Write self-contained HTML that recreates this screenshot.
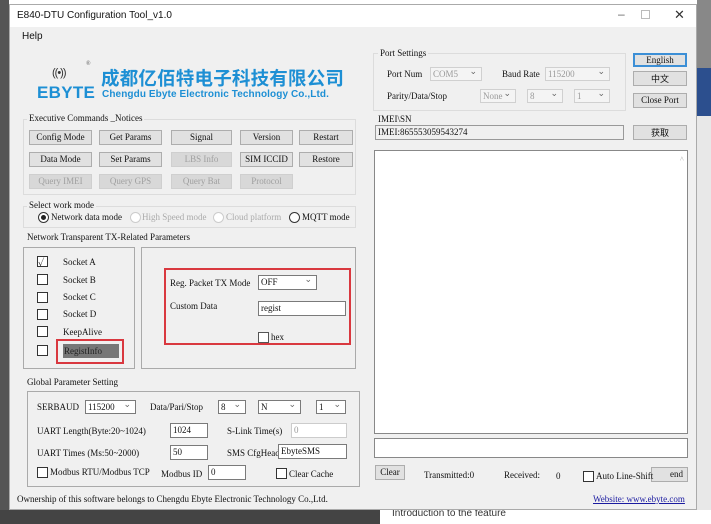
<!DOCTYPE html>
<html><head><meta charset="utf-8"><style>
*{box-sizing:border-box;margin:0;padding:0}
body{width:711px;height:524px;overflow:hidden;position:relative;background:#fff;font-family:"Liberation Serif","Noto Serif CJK SC",serif;font-size:9px;color:#111}
.a{position:absolute;white-space:nowrap}
.win{position:absolute;left:9px;top:4px;width:688px;height:506px;background:#f0f0f0;border:1px solid #aaa}
.bt{position:absolute;background:#e1e1e1;border:1px solid #adadad;text-align:center;font-size:9px;line-height:13px}
.dis{color:#a0a0a0;background:#d8d8d8;border-color:#cfcfcf}
.grp{position:absolute;border:1px solid #dcdcdc}
.in{position:absolute;background:#fff;border:1px solid #7a7a7a;font-size:9px;line-height:13px;padding-left:2px}
.sel{position:absolute;background:#fff;border:1px solid #7a7a7a;font-size:9px;line-height:13px;padding-left:2px}
.sel:after{content:"⌄";position:absolute;right:4px;top:-3px;color:#666}
.sd{background:#f4f4f4;border-color:#d0d0d0;color:#999}
.cb{position:absolute;width:11px;height:11px;border:1px solid #333;background:#fff}
.rd{position:absolute;width:11px;height:11px;border:1px solid #333;border-radius:50%;background:#fff}
.red{position:absolute;border:2px solid #d9383f}
</style></head><body>
<div class="a" style="left:0;top:0;width:9px;height:524px;background:#555"></div>
<div class="a" style="left:0;top:510px;width:380px;height:14px;background:#444"></div>
<div class="a" style="left:697px;top:0;width:14px;height:70px;background:#888"></div>
<div class="a" style="left:697px;top:68px;width:14px;height:48px;background:#2c4f8e"></div>
<div class="a" style="left:697px;top:116px;width:14px;height:394px;background:#e8e8e8"></div>
<div class="a" style="left:392px;top:508px;font-family:'Liberation Sans';font-size:10px;color:#333">Introduction to the feature</div>
<div class="win">
<div class="a" style="left:0;top:0;width:686px;height:22px;background:#fff"></div>
<div class="a" style="left:7px;top:5px;font-family:'Liberation Sans';font-size:10px">E840-DTU Configuration Tool_v1.0</div>
<div class="a" style="left:608px;top:2px;font-family:'Liberation Sans';font-size:12px;color:#666">–</div>
<div class="a" style="left:631px;top:5px;width:9px;height:9px;border:1px solid #bbb"></div>
<div class="a" style="left:664px;top:2px;font-family:'Liberation Sans';font-size:13px;color:#333">✕</div>
<div class="a" style="left:12px;top:26px;font-family:'Liberation Sans';font-size:10px">Help</div>
<!-- logo -->
<div class="a" style="left:42px;top:62px;font-family:'Liberation Sans';font-size:11px;color:#333;letter-spacing:-1px">((•))</div>
<div class="a" style="left:76px;top:56px;font-size:6px;color:#555">®</div>
<div class="a" style="left:27px;top:78px;font-family:'Liberation Sans';font-weight:bold;font-size:17px;color:#1d8fd4;letter-spacing:0.3px">EBYTE</div>
<div class="a" style="left:91px;top:62px;font-family:'Noto Sans CJK SC',sans-serif;font-weight:bold;font-size:18.5px;line-height:22px;color:#1d8fd4;letter-spacing:0.2px">成都亿佰特电子科技有限公司</div>
<div class="a" style="left:92px;top:84px;font-family:'Liberation Sans';font-weight:bold;font-size:10px;color:#1d8fd4;letter-spacing:0.1px">Chengdu Ebyte Electronic Technology Co.,Ltd.</div>
<!-- exec -->
<div class="grp" style="left:13px;top:114px;width:333px;height:76px"></div>
<div class="a" style="left:17px;top:108px;background:#f0f0f0;padding:0 2px">Executive Commands _Notices</div>
<div class="bt" style="left:19px;top:125px;width:63px;height:15px">Config Mode</div>
<div class="bt" style="left:89px;top:125px;width:63px;height:15px">Get Params</div>
<div class="bt" style="left:161px;top:125px;width:61px;height:15px">Signal</div>
<div class="bt" style="left:230px;top:125px;width:53px;height:15px">Version</div>
<div class="bt" style="left:289px;top:125px;width:54px;height:15px">Restart</div>
<div class="bt" style="left:19px;top:147px;width:63px;height:15px">Data Mode</div>
<div class="bt" style="left:89px;top:147px;width:63px;height:15px">Set Params</div>
<div class="bt dis" style="left:161px;top:147px;width:61px;height:15px">LBS Info</div>
<div class="bt" style="left:230px;top:147px;width:53px;height:15px">SIM ICCID</div>
<div class="bt" style="left:289px;top:147px;width:54px;height:15px">Restore</div>
<div class="bt dis" style="left:19px;top:169px;width:63px;height:15px">Query IMEI</div>
<div class="bt dis" style="left:89px;top:169px;width:63px;height:15px">Query GPS</div>
<div class="bt dis" style="left:161px;top:169px;width:61px;height:15px">Query Bat</div>
<div class="bt dis" style="left:230px;top:169px;width:53px;height:15px">Protocol</div>
<!-- work mode -->
<div class="grp" style="left:13px;top:201px;width:333px;height:22px"></div>
<div class="a" style="left:17px;top:195px;background:#f0f0f0;padding:0 2px">Select work mode</div>
<div class="rd" style="left:28px;top:207px"></div><div class="a" style="left:31px;top:210px;width:5px;height:5px;border-radius:50%;background:#222"></div>
<div class="a" style="left:41px;top:207px">Network data mode</div>
<div class="rd" style="left:120px;top:207px;border-color:#ccc"></div><div class="a" style="left:132px;top:207px;color:#aaa">High Speed mode</div>
<div class="rd" style="left:203px;top:207px;border-color:#ccc"></div><div class="a" style="left:216px;top:207px;color:#aaa">Cloud platform</div>
<div class="rd" style="left:279px;top:207px"></div><div class="a" style="left:292px;top:207px">MQTT mode</div>
<!-- network -->
<div class="a" style="left:17px;top:227px">Network Transparent TX-Related Parameters</div>
<div class="grp" style="left:13px;top:242px;width:112px;height:122px;border-color:#aaa"></div>
<div class="grp" style="left:131px;top:242px;width:215px;height:122px;border-color:#aaa"></div>
<div class="cb" style="left:27px;top:251px"></div><div class="a" style="left:28px;top:249px;font-size:10px">✓</div>
<div class="a" style="left:53px;top:252px">Socket A</div>
<div class="cb" style="left:27px;top:269px"></div><div class="a" style="left:53px;top:270px">Socket B</div>
<div class="cb" style="left:27px;top:287px"></div><div class="a" style="left:53px;top:287px">Socket C</div>
<div class="cb" style="left:27px;top:304px"></div><div class="a" style="left:53px;top:304px">Socket D</div>
<div class="cb" style="left:27px;top:321px"></div><div class="a" style="left:53px;top:322px">KeepAlive</div>
<div class="cb" style="left:27px;top:340px"></div>
<div class="a" style="left:53px;top:339px;width:56px;height:14px;background:#777;color:#222;line-height:14px;padding-left:1px">RegistInfo</div>
<div class="red" style="left:46px;top:334px;width:68px;height:25px"></div>
<div class="red" style="left:154px;top:263px;width:187px;height:77px"></div>
<div class="a" style="left:160px;top:273px">Reg. Packet TX Mode</div>
<div class="sel" style="left:248px;top:270px;width:59px;height:15px">OFF</div>
<div class="a" style="left:160px;top:296px">Custom Data</div>
<div class="in" style="left:248px;top:296px;width:88px;height:15px">regist</div>
<div class="cb" style="left:248px;top:327px;border-color:#555"></div><div class="a" style="left:261px;top:327px">hex</div>
<!-- global -->
<div class="a" style="left:17px;top:372px">Global Parameter Setting</div>
<div class="grp" style="left:17px;top:386px;width:333px;height:96px;border-color:#aaa"></div>
<div class="a" style="left:27px;top:397px">SERBAUD</div>
<div class="sel" style="left:75px;top:395px;width:51px;height:14px">115200</div>
<div class="a" style="left:140px;top:397px">Data/Pari/Stop</div>
<div class="sel" style="left:208px;top:395px;width:28px;height:14px">8</div>
<div class="sel" style="left:248px;top:395px;width:43px;height:14px">N</div>
<div class="sel" style="left:306px;top:395px;width:30px;height:14px">1</div>
<div class="a" style="left:27px;top:421px">UART Length(Byte:20~1024)</div>
<div class="in" style="left:160px;top:418px;width:38px;height:15px">1024</div>
<div class="a" style="left:217px;top:421px">S-Link Time(s)</div>
<div class="in" style="left:281px;top:418px;width:56px;height:15px;color:#999;border-color:#ccc">0</div>
<div class="a" style="left:27px;top:443px">UART Times (Ms:50~2000)</div>
<div class="in" style="left:160px;top:440px;width:38px;height:15px">50</div>
<div class="a" style="left:217px;top:443px">SMS CfgHead</div>
<div class="in" style="left:268px;top:439px;width:69px;height:15px">EbyteSMS</div>
<div class="cb" style="left:27px;top:462px"></div><div class="a" style="left:40px;top:462px">Modbus RTU/Modbus TCP</div>
<div class="a" style="left:151px;top:464px">Modbus ID</div>
<div class="in" style="left:198px;top:460px;width:38px;height:15px">0</div>
<div class="cb" style="left:266px;top:463px"></div><div class="a" style="left:279px;top:464px">Clear Cache</div>
<div class="a" style="left:7px;top:489px">Ownership of this software belongs to Chengdu Ebyte Electronic Technology Co.,Ltd.</div>
<div class="a" style="left:583px;top:489px;color:#1a1aa0;text-decoration:underline">Website: www.ebyte.com</div>
<!-- right -->
<div class="grp" style="left:363px;top:48px;width:253px;height:58px"></div>
<div class="a" style="left:368px;top:43px;background:#f0f0f0;padding:0 2px">Port Settings</div>
<div class="a" style="left:377px;top:64px">Port Num</div>
<div class="sel sd" style="left:420px;top:62px;width:52px;height:14px">COM5</div>
<div class="a" style="left:492px;top:64px">Baud Rate</div>
<div class="sel sd" style="left:535px;top:62px;width:65px;height:14px">115200</div>
<div class="a" style="left:377px;top:86px">Parity/Data/Stop</div>
<div class="sel sd" style="left:470px;top:84px;width:36px;height:14px">None</div>
<div class="sel sd" style="left:517px;top:84px;width:36px;height:14px">8</div>
<div class="sel sd" style="left:564px;top:84px;width:36px;height:14px">1</div>
<div class="bt" style="left:623px;top:48px;width:54px;height:14px;border:2px solid #3c8fd6;line-height:10px">English</div>
<div class="bt" style="left:623px;top:66px;width:54px;height:15px;font-family:'Noto Sans CJK SC',sans-serif">中文</div>
<div class="bt" style="left:623px;top:88px;width:54px;height:15px">Close Port</div>
<div class="a" style="left:368px;top:109px">IMEI\SN</div>
<div class="in" style="left:365px;top:120px;width:249px;height:15px;background:#f0f0f0;border-color:#999">IMEI:865553059543274</div>
<div class="bt" style="left:623px;top:120px;width:54px;height:15px;font-family:'Noto Sans CJK SC',sans-serif">获取</div>
<div class="in" style="left:364px;top:145px;width:314px;height:284px;border-color:#888"></div>
<div class="a" style="left:670px;top:150px;color:#aaa;font-size:8px">^</div>
<div class="in" style="left:364px;top:433px;width:314px;height:20px;border-color:#888"></div>
<div class="bt" style="left:365px;top:460px;width:30px;height:15px">Clear</div>
<div class="a" style="left:414px;top:465px">Transmitted:0</div>
<div class="a" style="left:494px;top:465px">Received:</div>
<div class="a" style="left:546px;top:466px">0</div>
<div class="bt" style="left:641px;top:462px;width:37px;height:15px;text-align:right;padding-right:4px">end</div>
<div class="cb" style="left:573px;top:466px"></div><div class="a" style="left:586px;top:466px">Auto Line-Shift</div>
</div>
</body></html>
